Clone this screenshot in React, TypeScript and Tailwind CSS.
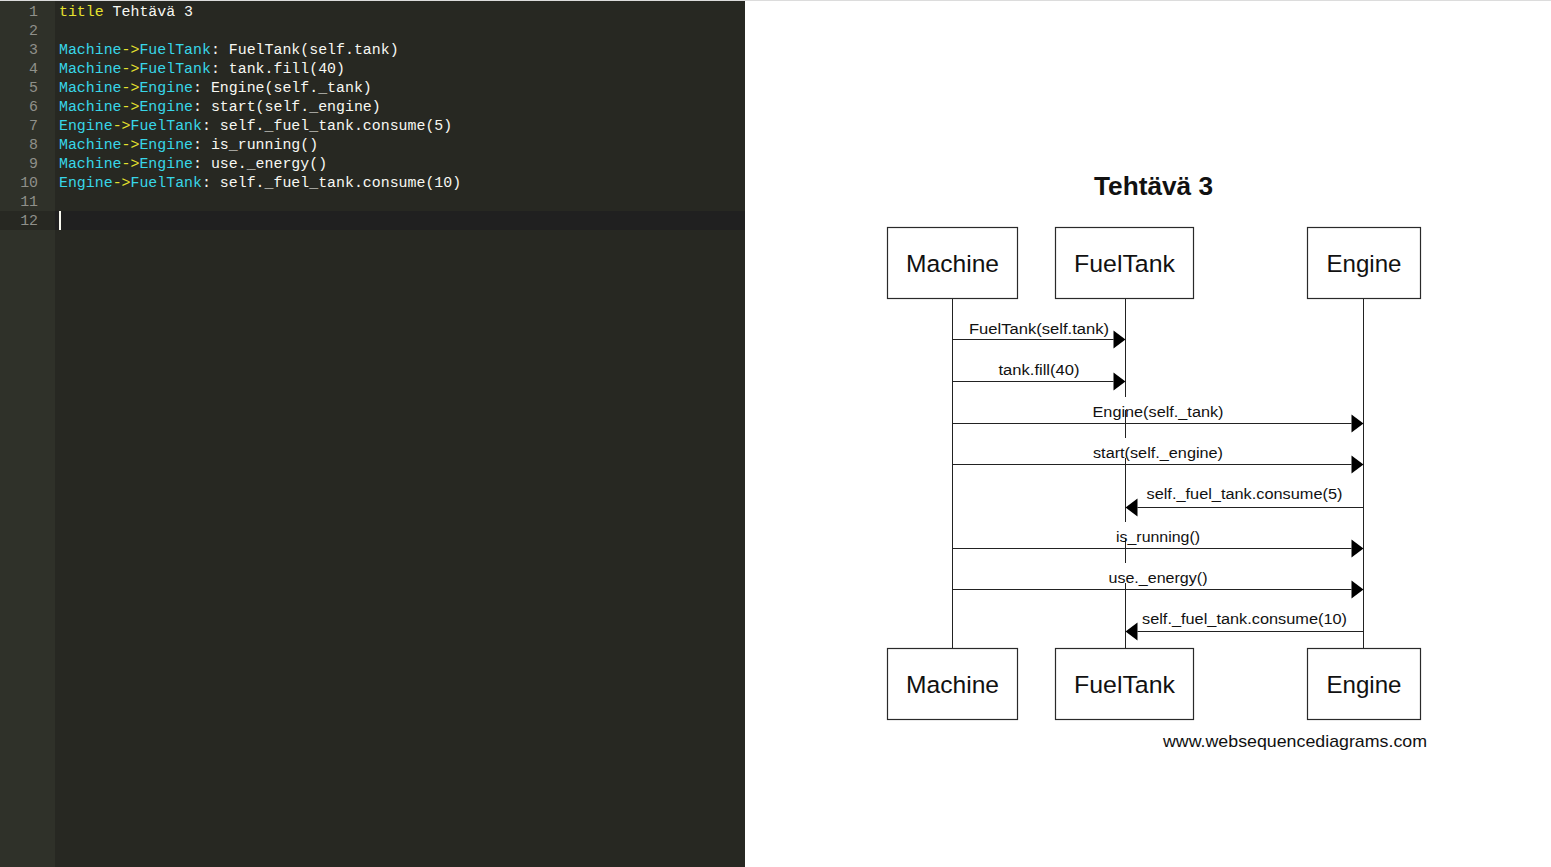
import React from "react";

type Seg = { t: string; c: string };

const Y = "text-[#e6e22e]";
const C = "text-[#38d6e8]";
const W = "text-[#f8f8f2]";

function msgLine(from: string, to: string, msg: string): Seg[] {
  return [
    { t: from, c: C },
    { t: "->", c: Y },
    { t: to, c: C },
    { t: ": " + msg, c: W },
  ];
}

const lines: Seg[][] = [
  [
    { t: "title", c: Y },
    { t: " Tehtävä 3", c: W },
  ],
  [],
  msgLine("Machine", "FuelTank", "FuelTank(self.tank)"),
  msgLine("Machine", "FuelTank", "tank.fill(40)"),
  msgLine("Machine", "Engine", "Engine(self._tank)"),
  msgLine("Machine", "Engine", "start(self._engine)"),
  msgLine("Engine", "FuelTank", "self._fuel_tank.consume(5)"),
  msgLine("Machine", "Engine", "is_running()"),
  msgLine("Machine", "Engine", "use._energy()"),
  msgLine("Engine", "FuelTank", "self._fuel_tank.consume(10)"),
  [],
  [],
];

const CURRENT = 11;

function Editor() {
  return (
    <div className="flex w-[745px] h-full bg-[#272822] font-['Liberation_Mono',monospace] text-[14.9px] leading-[19px]">
      {/* gutter */}
      <div className="w-[55px] shrink-0 bg-[#2f3129] pt-px">
        {lines.map((_, i) => (
          <div
            key={i}
            className={`h-[19px] pr-[17px] pt-px text-right text-[#8f908a] ${
              i === CURRENT ? "bg-[#272822]" : ""
            }`}
          >
            {i + 1}
          </div>
        ))}
      </div>
      {/* code */}
      <div className="flex-1 pt-px">
        {lines.map((segs, i) => (
          <div
            key={i}
            className={`relative h-[19px] pl-[4px] pt-px whitespace-pre ${
              i === CURRENT ? "bg-[#202020]" : ""
            }`}
          >
            {segs.map((s, j) => (
              <span key={j} className={s.c}>
                {s.t}
              </span>
            ))}
            {i === CURRENT && (
              <span className="absolute left-[4px] top-0 h-[19px] w-[2px] bg-[#f8f8f0]" />
            )}
          </div>
        ))}
      </div>
    </div>
  );
}

const X = { m: 952.5, f: 1125.5, e: 1363.5 };

type Msg = { text: string; from: number; to: number; y: number; base: number; w: number };

const msgs: Msg[] = [
  { text: "FuelTank(self.tank)", from: X.m, to: X.f, y: 339.5, base: 334, w: 140 },
  { text: "tank.fill(40)", from: X.m, to: X.f, y: 381.5, base: 375, w: 81 },
  { text: "Engine(self._tank)", from: X.m, to: X.e, y: 423.5, base: 417, w: 131 },
  { text: "start(self._engine)", from: X.m, to: X.e, y: 464.5, base: 458, w: 130 },
  { text: "self._fuel_tank.consume(5)", from: X.e, to: X.f, y: 507.5, base: 499, w: 196 },
  { text: "is_running()", from: X.m, to: X.e, y: 548.5, base: 542, w: 84 },
  { text: "use._energy()", from: X.m, to: X.e, y: 589.5, base: 583, w: 99 },
  { text: "self._fuel_tank.consume(10)", from: X.e, to: X.f, y: 631.5, base: 624, w: 205 },
];

const boxes = [
  { label: "Machine", x: 887.5, w: 130, tw: 93 },
  { label: "FuelTank", x: 1055.5, w: 138, tw: 101 },
  { label: "Engine", x: 1307.5, w: 113, tw: 75 },
];

// FuelTank lifeline is broken where label backgrounds cover it
const fuelSegs: [number, number][] = [
  [298, 397],
  [410, 438],
  [458, 522],
  [538, 563],
  [583, 648],
];

const FONT = "'Liberation Sans', Arial, sans-serif";

function Diagram() {
  return (
    <div className="flex-1 h-full bg-white">
      <svg viewBox="745 1 806 866" width="806" height="866" className="block">
        <text
          x={1153.5}
          y={195}
          textAnchor="middle"
          fontFamily={FONT}
          fontWeight="bold"
          fontSize={26}
          fill="#111"
          textLength={119}
          lengthAdjust="spacingAndGlyphs"
        >
          Tehtävä 3
        </text>

        {/* lifelines */}
        <line x1={X.m} y1={298} x2={X.m} y2={648} stroke="#222" strokeWidth={1} />
        <line x1={X.e} y1={298} x2={X.e} y2={648} stroke="#222" strokeWidth={1} />
        {fuelSegs.map(([a, b], i) => (
          <line key={i} x1={X.f} y1={a} x2={X.f} y2={b} stroke="#222" strokeWidth={1} />
        ))}

        {/* participant boxes */}
        {[227.5, 648.5].map((by) =>
          boxes.map((b) => (
            <g key={b.label + by}>
              <rect x={b.x} y={by} width={b.w} height={71} fill="white" stroke="#2a2a2a" strokeWidth={1.2} />
              <text
                x={b.x + b.w / 2}
                y={by + 44.5}
                textAnchor="middle"
                fontFamily={FONT}
                fontSize={24.5}
                fill="#111"
                textLength={b.tw}
                lengthAdjust="spacingAndGlyphs"
              >
                {b.label}
              </text>
            </g>
          ))
        )}

        {/* messages */}
        {msgs.map((m, i) => {
          const dir = m.to > m.from ? 1 : -1;
          const headBase = m.to - dir * 12;
          return (
            <g key={i}>
              <line x1={m.from} y1={m.y} x2={headBase} y2={m.y} stroke="#222" strokeWidth={1} />
              <polygon
                points={`${headBase},${m.y - 9} ${m.to},${m.y} ${headBase},${m.y + 9}`}
                fill="#000"
              />
              <text
                x={(m.from + m.to) / 2}
                y={m.base}
                textAnchor="middle"
                fontFamily={FONT}
                fontSize={15.5}
                fill="#111"
                textLength={m.w}
                lengthAdjust="spacingAndGlyphs"
              >
                {m.text}
              </text>
            </g>
          );
        })}

        <text
          x={1295}
          y={747}
          textAnchor="middle"
          fontFamily={FONT}
          fontSize={17}
          fill="#111"
          textLength={264}
          lengthAdjust="spacingAndGlyphs"
        >
          www.websequencediagrams.com
        </text>
      </svg>
    </div>
  );
}

export default function App() {
  return (
    <div className="flex w-[1551px] h-[867px] overflow-hidden border-t border-[#dcdcdc]">
      <Editor />
      <Diagram />
    </div>
  );
}
